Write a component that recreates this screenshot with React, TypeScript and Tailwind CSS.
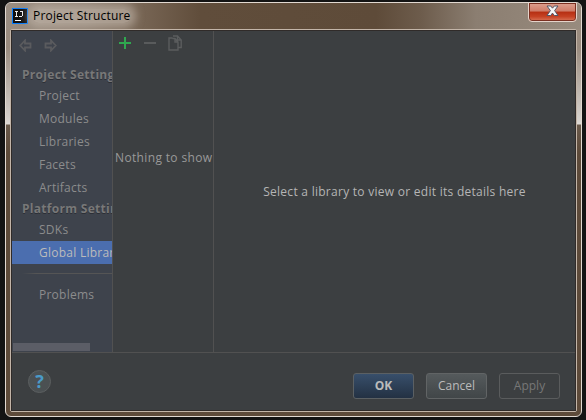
import type { ReactNode } from "react";

function SideItem({ label, selected = false }: { label: string; selected?: boolean }) {
  return (
    <div
      className={`h-[23px] shrink-0 overflow-hidden whitespace-nowrap pl-[27px] leading-[24px] tracking-[0.25px] ${
        selected ? "bg-[#4b6eaf] text-[#bbbbbb]" : "text-[#8c8c8c]"
      }`}
    >
      {label}
    </div>
  );
}

function SideHeader({ label }: { label: string }) {
  return (
    <div className="h-[19px] shrink-0 overflow-hidden whitespace-nowrap pl-[10px] font-bold leading-[19px] tracking-[0.3px] text-[#787878] [text-shadow:0_1px_0_#2c2f36]">
      {label}
    </div>
  );
}

function DialogButton({ className, children }: { className: string; children: ReactNode }) {
  return (
    <button className={`h-[26px] w-[61px] rounded-[3px] border text-center leading-[22px] ${className}`}>
      {children}
    </button>
  );
}

function AppLogo() {
  return (
    <svg width="16" height="16" viewBox="0 0 16 16" shapeRendering="crispEdges">
      <rect width="16" height="16" fill="#087cfa" />
      <rect x="1" y="1" width="14" height="14" fill="#101010" />
      <path d="M3 3.5h3M4.5 3v5M3 8.5h3M8 3.5h3M10.5 3v5M7 8.5h3" stroke="#f0f0f0" fill="none" />
      <rect x="3" y="12" width="6" height="1" fill="#fff" />
    </svg>
  );
}

function BackArrow({ flip = false }: { flip?: boolean }) {
  return (
    <svg width="13" height="13" viewBox="0 0 13 13" className={flip ? "-scale-x-100" : ""}>
      <path d="M1.2 6.5 6 1.5V4.5H11.5V8.5H6V11.5Z" fill="none" stroke="#5a5b5e" strokeWidth="1.8" />
    </svg>
  );
}

export default function App() {
  return (
    <div className="h-[420px] w-[586px] overflow-hidden bg-[#141414] pl-[5px] pt-[2px] font-['Open_Sans','Noto_Sans',sans-serif] text-[12px]">
      <div className="relative flex h-[415px] w-[577px] flex-col overflow-hidden rounded-[6px] border border-[#e2d9d1] bg-[linear-gradient(180deg,#9a8c7f_0px,#9a8c7f_45px,#d8d3ce_118px,#dedad6_121px,#6a5a4b_122px,#5e4b3a_150px,#5e4b3a_100%)]">
        <div className="flex h-[26px] shrink-0 items-center bg-[linear-gradient(90deg,#9a8e82_0px,#8d7e70_80px,#776554_135px,#604d3b_195px,#5e4b39_370px,#6d5c4c_415px,#8b7e71_470px,#988b7e_100%)] pl-[6px]">
          <AppLogo />
          <div className="ml-[4px] rounded-full bg-[#c5b9ad]/60 px-[1px] leading-[14px] tracking-[0.18px] text-black shadow-[0_0_9px_5px_rgba(197,185,173,0.6)]">
            Project Structure
          </div>
        </div>

        <div className="ml-[4px] flex h-[383px] w-[567px] flex-col rounded-[2px] border border-[#c3b5a8] bg-[#3c3f41]">
          <div className="flex h-full flex-col border border-[#302b29]">
            <div className="flex h-[321px] shrink-0">
              <div className="flex w-[101px] shrink-0 flex-col border-r border-[#515151] bg-[#3e434c]">
                <div className="flex h-[34px] shrink-0 items-start gap-[12px] pl-[7px] pt-[8px]">
                  <BackArrow />
                  <BackArrow flip />
                </div>
                <SideHeader label="Project Settings" />
                <SideItem label="Project" />
                <SideItem label="Modules" />
                <SideItem label="Libraries" />
                <SideItem label="Facets" />
                <SideItem label="Artifacts" />
                <SideHeader label="Platform Settings" />
                <SideItem label="SDKs" />
                <SideItem label="Global Libraries" selected />
                <div className="ml-[10px] mt-[9px] h-px shrink-0 bg-[linear-gradient(90deg,#3e434c,#555555_14px)]" />
                <div className="mt-[9px]">
                  <SideItem label="Problems" />
                </div>
                <div className="ml-px mt-auto mb-px h-[8px] w-[77px] shrink-0 bg-[#5b5d66]" />
              </div>

              <div className="flex w-[101px] shrink-0 flex-col border-r border-[#515151] text-[#999999]">
                <div className="flex h-[26px] items-start pl-[5px] pt-[3px]">
                  <svg width="66" height="20" viewBox="0 0 66 20">
                    <path d="M1 9H13M7 3V15" stroke="#2fa84f" strokeWidth="2" />
                    <path d="M26 9H38" stroke="#595b5c" strokeWidth="2" />
                    <path
                      d="M54.5 4H51V16H60V14M55 2H59.5L63.2 6V13.5H60M59.5 2V6H63.2M54.5 4.5H57L60 8V16M57 4.5V8H60"
                      fill="none"
                      stroke="#5b5d5e"
                      strokeWidth="1.4"
                    />
                  </svg>
                </div>
                <div className="mt-[91px] whitespace-nowrap pl-[2px] leading-[20px] tracking-[0.35px]">
                  Nothing to show
                </div>
              </div>

              <div className="flex grow items-center justify-center whitespace-nowrap leading-[20px] tracking-[0.27px] text-[#b5b5b5]">
                Select a library to view or edit its details here
              </div>
            </div>

            <div className="flex grow items-start border-t border-[#515151] pl-[16px] pr-[15px]">
              <div className="mt-[17px] flex size-[23px] items-center justify-center rounded-full border border-[#5c5f60] bg-[#4b5052] pb-[2px] text-[18px] font-bold leading-none text-[#4a9ac8]">
                ?
              </div>
              <div className="ml-auto mt-[20px] flex gap-[12px]">
                <DialogButton className="border-[#5b6063] bg-linear-to-b from-[#384f6b] to-[#233143] font-bold text-[#bbbbbb]">
                  OK
                </DialogButton>
                <DialogButton className="border-[#616465] bg-linear-to-b from-[#555a5c] to-[#414648] text-[#bbbbbb]">
                  Cancel
                </DialogButton>
                <DialogButton className="border-[#5a5c5d] text-[#777777]">Apply</DialogButton>
              </div>
            </div>
          </div>
        </div>

        <div className="absolute right-[4px] top-[-1px] flex h-[20px] w-[49px] items-center justify-center rounded-b-[4px] border border-[#e5d3ca] bg-[linear-gradient(180deg,#dda08f_0%,#cf7c68_45%,#b62f13_50%,#c54224_75%,#d87558_100%)] pb-[2px] shadow-[inset_0_0_0_1px_#7b3021]">
          <svg width="13" height="12" viewBox="0 0 13 12">
            <path
              d="M1 1H4.7L6.5 3.2 8.3 1H12L8.6 5.6 12 10.5H8.3L6.5 8.1 4.7 10.5H1L4.4 5.6Z"
              fill="#f6f6f6"
              stroke="#535666"
            />
          </svg>
        </div>
      </div>
    </div>
  );
}
